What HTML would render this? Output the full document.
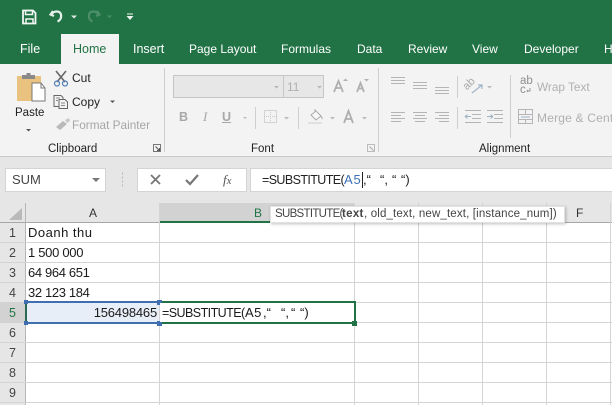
<!DOCTYPE html>
<html><head><meta charset="utf-8">
<style>
html,body{margin:0;padding:0;background:#fff}
#r{position:relative;width:612px;height:405px;overflow:hidden;font-family:"Liberation Sans",sans-serif;background:#fff}
#r div,#r svg{position:absolute}
.t{white-space:nowrap;line-height:16px;height:16px}
.tab{color:#fff;font-size:12px;top:41px}
.rb{color:#222;font-size:12px}
.dis{color:#b0b0b0;font-size:12px}
.c{color:#1a1a1a;font-size:13px;white-space:nowrap;line-height:16px}
.f{color:#222;font-size:13px;white-space:nowrap;line-height:16px;height:16px}
.rh{left:0;width:25px;text-align:center;color:#444;font-size:12.5px;line-height:20px;height:20px}
</style></head><body>
<div id="r">
<div style="left:0;top:0;width:612px;height:64px;background:#217346"></div>
<div style="left:61px;top:34px;width:58px;height:30px;background:#f3f3f3"></div>

<svg style="left:0;top:0" width="150" height="34" viewBox="0 0 150 34">
<path d="M23 10.500h10l2.500 2.500v10.500h-12.500z" fill="none" stroke="#f2f7f4" stroke-width="1.800"/>
<path d="M25.500 10.500h7v4h-7zM26 23.500v-4.500h7v4.500" fill="none" stroke="#f2f7f4" stroke-width="1.500"/>
<path d="M53 11l-2.500 3.500 3.500 1.500M51 14.500c3-4 9-4 10 0 .6 3.500-1 6-3.500 7" fill="none" stroke="#e6f0ea" stroke-width="2.200"/>
<path d="M71 15.500h6l-3 3z" fill="#dfeae4"/>
<path d="M97 11l2.500 3.500-3.500 1.500M99 14.500c-3-4-9-4-10 0-.6 3.500 1 6 3.500 7" fill="none" stroke="#4d8f6b" stroke-width="2.200"/>
<path d="M107 15.500h5l-2.500 2.500z" fill="#4d8f6b"/>
<path d="M127 13.500h6v1h-6zM126.500 16h7l-3.500 4z" fill="#eef5f1"/>
</svg>

<div class="t tab" style="left:20px;font-size:12.500px">File</div>
<div class="t tab" style="left:73px;color:#217346;font-size:12.500px">Home</div>
<div class="t tab" style="left:133px;font-size:12.500px">Insert</div>
<div class="t tab" style="left:189px">Page Layout</div>
<div class="t tab" style="left:281px">Formulas</div>
<div class="t tab" style="left:357px">Data</div>
<div class="t tab" style="left:408px">Review</div>
<div class="t tab" style="left:472px">View</div>
<div class="t tab" style="left:524px">Developer</div>
<div class="t tab" style="left:604px">H</div>

<div style="left:0;top:64px;width:612px;height:92px;background:#f3f3f3"></div>
<div style="left:0;top:156px;width:612px;height:1px;background:#c9c9c9"></div>
<div style="left:0;top:157px;width:612px;height:46px;background:#e6e6e6"></div>

<svg style="left:0;top:64px" width="612" height="92" viewBox="0 64 612 92">
<!-- separators -->
<path d="M164.500 68v84M378.500 68v84M510.500 75v63M255.500 107v22M298.500 107v22M457.500 76v22M457.500 107v22" stroke="#cfcfcf" fill="none"/>
<!-- paste -->
<rect x="17" y="76" width="24" height="25" fill="#e9c27f"/>
<rect x="22" y="75" width="13" height="4" fill="#8a8a8a"/>
<rect x="26.500" y="73" width="4" height="3" fill="#8a8a8a"/>
<path d="M32 83h9l4 5v13H32z" fill="#fff" stroke="#777"/>
<path d="M41 83v5h4" fill="none" stroke="#777"/>
<path d="M26 129h5l-2.500 2.500z" fill="#555"/>
<!-- cut -->
<path d="M56 71l9 11M66 71l-9 11" stroke="#666" stroke-width="1.600" fill="none"/>
<circle cx="57" cy="83.500" r="2.500" fill="none" stroke="#4f7fb8" stroke-width="1.200"/>
<circle cx="65" cy="83.500" r="2.500" fill="none" stroke="#4f7fb8" stroke-width="1.200"/>
<!-- copy -->
<path d="M54 95.500h7l2 2v9h-9z" fill="#f3f3f3" stroke="#666"/>
<path d="M59 99.500h6l2.500 2.500v6.500H59z" fill="#f3f3f3" stroke="#666"/>
<path d="M56 98h4M56 100.500h2M61 103h4M61 105.500h4" stroke="#888"/>
<path d="M110 100.500h5l-2.500 2.500z" fill="#555"/>
<!-- painter -->
<path d="M56 127l7-6 4 3-7 6z" fill="#b9b9b9"/>
<path d="M65 120l4-2 1 3-3 2z" fill="#c8c8c8"/>
<!-- launchers -->
<path d="M153.500 144.500h7v7h-7z" fill="none" stroke="#777"/>
<path d="M155.500 146.500l4 4M157 150.500h2.500V148" fill="none" stroke="#555"/>
<path d="M367.500 144.500h7v7h-7z" fill="none" stroke="#bbb"/>
<path d="M369.500 146.500l4 4" fill="none" stroke="#aaa"/>
<!-- font boxes -->
<rect x="173.500" y="75.500" width="150" height="22" fill="#e7e7e7" stroke="#c6c6c6"/>
<path d="M283.500 75v23" stroke="#c6c6c6"/>
<path d="M274 86h5l-2.500 2.500zM317 86h5l-2.500 2.500z" fill="#b9b9b9"/>
<!-- A up down -->
<path d="M334 92l4.500-11 4.500 11M335.500 88h6" fill="none" stroke="#b0b0b0" stroke-width="1.800"/>
<path d="M343 81h5l-2.500-2.500z" fill="#b0b0b0"/>
<path d="M357 92l3.500-9 3.500 9M358.500 88.500h4" fill="none" stroke="#b0b0b0" stroke-width="1.800"/>
<path d="M364 79h5l-2.500 2.500z" fill="#b0b0b0"/>
<!-- font row 2 -->
<path d="M243 117h4l-2 2zM284 117h5l-2.500 2.500zM330 117h5l-2.500 2.500zM362 117h5l-2.500 2.500z" fill="#bbb"/>
<rect x="264.500" y="110.500" width="12" height="12" fill="none" stroke="#b5b5b5" stroke-dasharray="1 1"/>
<path d="M264 116.500h13M270.500 110v13" stroke="#c8c8c8" stroke-dasharray="1 1"/>
<path d="M311 115l5-4 5 5-5 4z" fill="#f7f7f7" stroke="#aaa"/>
<path d="M315 109v3M321 116l1.500 3" stroke="#aaa" fill="none"/>
<rect x="308" y="122" width="14" height="2" fill="#e0e0e0"/>
<path d="M344 123l4.500-12 4.500 12M345.500 119h6" fill="none" stroke="#aeaeae" stroke-width="1.800"/>
<!-- alignment -->
<g stroke="#b5b5b5" fill="none">
<path d="M391 77.500h14M391 80.500h14M391 83.500h14"/>
<path d="M413 82.500h14M413 85.500h14M413 88.500h14"/>
<path d="M435 87.500h14M435 90.500h14M435 93.500h14"/>
<path d="M391 112.500h14M391 115.500h10M391 118.500h14M391 121.500h10"/>
<path d="M413 112.500h14M415 115.500h10M413 118.500h14M415 121.500h10"/>
<path d="M435 112.500h14M439 115.500h10M435 118.500h14M439 121.500h10"/>
<path d="M465 110.500h16M472 114.500h9M472 118.500h9M465 122.500h16"/>
<path d="M487 110.500h16M494 114.500h9M494 118.500h9M487 122.500h16"/>
<path d="M465 116.500h6M465 116.500l2.500-2M465 116.500l2.500 2M487 116.500h6M493 116.500l-2.500-2M493 116.500l-2.500 2" stroke="#9fb2c4"/>
<path d="M472 93l10-8M478 85h4v4" stroke="#9fb4c9" stroke-width="1.200"/>
<rect x="518.500" y="109.500" width="14" height="14"/>
<path d="M518 114.500h15M518 119.500h15M525.500 110v4M525.500 120v3.500"/>
<path d="M521 117h9" stroke="#9fb2c4"/>
<path d="M530 88v3h-3M528 90l-1 1 1 1" stroke="#999"/>
</g>
<path d="M487 86h5l-2.500 2.500z" fill="#bbb"/>
</svg>

<div class="t rb" style="left:15px;top:105px;font-size:11.500px">Paste</div>
<div class="t rb" style="left:72px;top:70px">Cut</div>
<div class="t rb" style="left:72px;top:94px">Copy</div>
<div class="t dis" style="left:72px;top:117px;color:#a6a6a6;font-size:11.800px">Format Painter</div>
<div class="t rb" style="left:48px;top:141px;font-size:11.500px">Clipboard</div>
<div class="t rb" style="left:251px;top:141px;font-size:11.500px">Font</div>
<div class="t rb" style="left:479px;top:141px;font-size:11.500px">Alignment</div>
<div class="t dis" style="left:287px;top:79px">11</div>
<div class="t" style="left:179px;top:109px;font-size:12.500px;font-weight:bold;color:#a8a8a8">B</div>
<div class="t" style="left:203px;top:109px;font-size:13px;font-style:italic;font-family:'Liberation Serif',serif;color:#a8a8a8">I</div>
<div class="t" style="left:222px;top:109px;font-size:12.500px;font-weight:bold;text-decoration:underline;color:#a8a8a8">U</div>
<div class="t" style="left:463px;top:76px;font-size:11px;color:#a8a8a8;transform:rotate(-45deg)">ab</div>
<div class="t" style="left:520px;top:77px;font-size:11.500px;line-height:9px;color:#8f8f8f;white-space:normal;width:12px">ab c</div>
<div class="t dis" style="left:537px;top:79px;font-size:11.800px">Wrap Text</div>
<div class="t dis" style="left:537px;top:110px;letter-spacing:.2px">Merge &amp; Center</div>

<!-- formula bar -->
<div style="left:5px;top:168px;width:101px;height:24px;background:#fff;border:1px solid #d4d4d4;box-sizing:border-box"></div>
<div class="t" style="left:12px;top:172px;font-size:13px;color:#444">SUM</div>
<div style="left:137px;top:168px;width:110px;height:24px;background:#fff;border:1px solid #d4d4d4;box-sizing:border-box"></div>
<div style="left:250px;top:168px;width:363px;height:24px;background:#fff;border:1px solid #d4d4d4;box-sizing:border-box"></div>
<svg style="left:0;top:160px" width="250" height="40" viewBox="0 160 250 40">
<path d="M92 178h8l-4 4z" fill="#777"/>
<path d="M122 173.500h1M122 177.500h1M122 181.500h1M122 185.500h1" stroke="#b8b8b8" stroke-width="2" fill="none"/>
<path d="M151 175l9 9M160 175l-9 9" stroke="#777" stroke-width="1.800" fill="none"/>
<path d="M186 180l4 4 8-9" stroke="#777" stroke-width="2.200" fill="none"/>
</svg>
<div class="t" style="left:223px;top:172px;font-size:13px;font-style:italic;font-family:'Liberation Serif',serif;color:#555">f<span style="font-size:11px">x</span></div>
<div class="f" style="left:262px;top:172px;font-size:12.500px;letter-spacing:-.6px">=SUBSTITUTE(</div>
<div class="f" style="left:344px;top:172px;color:#3b72b5;letter-spacing:.8px">A5</div>
<div class="f" style="left:363px;top:172px">,“</div>
<div class="f" style="left:380px;top:172px">“,</div>
<div class="f" style="left:392px;top:172px">“</div>
<div class="f" style="left:401px;top:172px">“)</div>
<div style="left:362px;top:172px;width:1px;height:16px;background:#222"></div>

<!-- headers -->
<div style="left:0;top:203px;width:25px;height:202px;background:#e6e6e6"></div>
<div style="left:25px;top:203px;width:587px;height:19px;background:#e6e6e6"></div>
<div style="left:159px;top:203px;width:195px;height:19px;background:#d2d2d2"></div>
<div style="left:0;top:222px;width:612px;height:1px;background:#a8a8a8"></div>
<div style="left:159px;top:221px;width:195px;height:2px;background:#217346"></div>
<div style="left:25px;top:203px;width:1px;height:202px;background:#b5b5b5"></div>
<svg style="left:8px;top:207px" width="16" height="14"><path d="M14 1v12H1z" fill="#b9b9b9"/></svg>
<div class="t" style="left:89px;top:205px;font-size:12px;color:#333">A</div>
<div class="t" style="left:254px;top:205px;font-size:12px;color:#217346">B</div>
<div class="t" style="left:576px;top:205px;font-size:12px;color:#333">F</div>

<!-- grid -->
<div style="left:0;top:242px;width:612px;height:1px;background:#d4d4d4"></div>
<div style="left:0;top:262px;width:612px;height:1px;background:#d4d4d4"></div>
<div style="left:0;top:282px;width:612px;height:1px;background:#d4d4d4"></div>
<div style="left:0;top:302px;width:612px;height:1px;background:#d4d4d4"></div>
<div style="left:0;top:322px;width:612px;height:1px;background:#d4d4d4"></div>
<div style="left:0;top:342px;width:612px;height:1px;background:#d4d4d4"></div>
<div style="left:0;top:362px;width:612px;height:1px;background:#d4d4d4"></div>
<div style="left:0;top:382px;width:612px;height:1px;background:#d4d4d4"></div>
<div style="left:0;top:402px;width:612px;height:1px;background:#d4d4d4"></div>
<div style="left:159px;top:203px;width:1px;height:202px;background:#d4d4d4"></div>
<div style="left:354px;top:203px;width:1px;height:202px;background:#d4d4d4"></div>
<div style="left:418px;top:203px;width:1px;height:202px;background:#d4d4d4"></div>
<div style="left:482px;top:203px;width:1px;height:202px;background:#d4d4d4"></div>
<div style="left:546px;top:203px;width:1px;height:202px;background:#d4d4d4"></div>
<div style="left:610px;top:203px;width:1px;height:202px;background:#d4d4d4"></div>

<div class="rh" style="top:223px">1</div>
<div class="rh" style="top:243px">2</div>
<div class="rh" style="top:263px">3</div>
<div class="rh" style="top:283px">4</div>
<div class="rh" style="top:303px;background:#d2d2d2;color:#217346;width:25px">5</div>
<div class="rh" style="top:323px">6</div>
<div class="rh" style="top:343px">7</div>
<div class="rh" style="top:363px">8</div>
<div class="rh" style="top:383px">9</div>

<div class="c" style="left:28px;top:225px;letter-spacing:.5px">Doanh thu</div>
<div class="c" style="left:28px;top:245px;letter-spacing:-.3px">1 500 000</div>
<div class="c" style="left:28px;top:265px;letter-spacing:-.35px">64 964 651</div>
<div class="c" style="left:28px;top:285px;letter-spacing:-.35px">32 123 184</div>

<!-- A5 range -->
<div style="left:26px;top:303px;width:133px;height:19px;background:#e8eef7"></div>
<div class="c" style="left:26px;top:305px;width:131px;text-align:right;letter-spacing:-.2px">156498465</div>
<div style="left:26px;top:301px;width:133px;height:2px;background:#3f6fb0"></div>
<div style="left:26px;top:322px;width:133px;height:2px;background:#3f6fb0"></div>
<div style="left:25px;top:302px;width:2px;height:21px;background:#2a6a50"></div>
<div style="left:157px;top:300px;width:5px;height:5px;background:#3f6fb0"></div>
<div style="left:157px;top:321px;width:5px;height:5px;background:#3f6fb0"></div>
<div style="left:24px;top:300px;width:4px;height:4px;background:#3f6fb0"></div>
<div style="left:24px;top:321px;width:4px;height:4px;background:#3f6fb0"></div>
<!-- B5 edit -->
<div style="left:160px;top:303px;width:195px;height:19px;background:#fff"></div>
<div style="left:162px;top:301px;width:193px;height:2px;background:#217346"></div>
<div style="left:162px;top:322px;width:193px;height:2px;background:#217346"></div>
<div style="left:354px;top:301px;width:2px;height:23px;background:#217346"></div>
<div style="left:352px;top:321px;width:5px;height:5px;background:#217346"></div>
<div class="c" style="left:162px;top:305px;font-size:12.500px;letter-spacing:-.55px">=SUBSTITUTE(</div>
<div class="c" style="left:245px;top:305px;letter-spacing:.5px">A5</div>
<div class="c" style="left:263px;top:305px">,“</div>
<div class="c" style="left:281px;top:305px">“,</div>
<div class="c" style="left:291px;top:305px">“</div>
<div class="c" style="left:300px;top:305px">“)</div>

<!-- tooltip -->
<div style="left:270px;top:206px;width:295px;height:17px;background:#fff;border:1px solid #e2e2e2;box-sizing:border-box;box-shadow:1px 1px 3px rgba(0,0,0,.25)"></div>
<div class="t" style="left:275px;top:206px;font-size:11.500px;color:#444;letter-spacing:-.7px">SUBSTITUTE(</div>
<div class="t" style="left:342px;top:206px;font-size:11.500px;color:#444;font-weight:bold;letter-spacing:.3px">text</div>
<div class="t" style="left:364px;top:206px;font-size:11.500px;color:#444;letter-spacing:.15px">, old_text, new_text, [instance_num])</div>
</div>
</body></html>
